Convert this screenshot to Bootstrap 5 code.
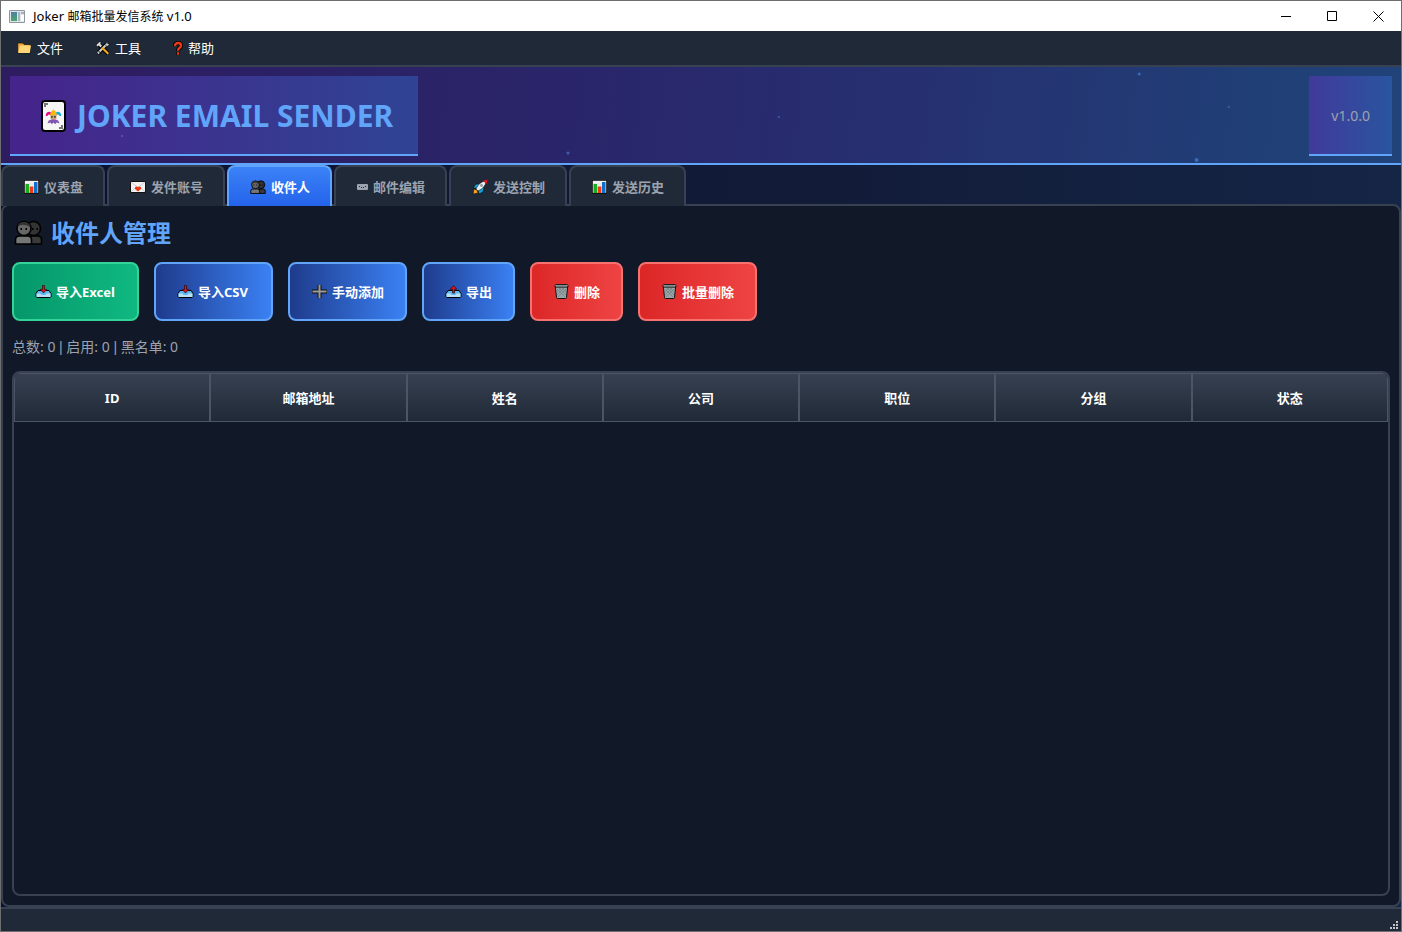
<!DOCTYPE html>
<html lang="zh-CN" data-bs-theme="dark">
<head>
<meta charset="utf-8">
<meta name="viewport" content="width=device-width, initial-scale=1">
<title>Joker 邮箱批量发信系统 v1.0</title>
<link href="https://cdn.jsdelivr.net/npm/bootstrap@5.3.0/dist/css/bootstrap.min.css" rel="stylesheet">
<style>
  :root {
    --line: #374151;
    --line-2: #4b5563;
    --panel: #1f2937;
    --page: #111827;
    --accent: #60a5fa;
    --dim: #9ca3af;
  }
  body {
    font-family: "Noto Sans", "Noto Sans CJK SC", sans-serif;
    font-size: 13px;
    line-height: 20px;
    color: #fff;
  }
  svg { display: block; flex: none; }
  .app-window {
    border: 1px solid #6e6e6e;
    background: linear-gradient(90deg, #0b1030 0%, #111a36 50%, #152546 100%);
  }
  .title-bar { height: 30px; background: #fff; color: #000; font-size: 12px; }
  .title-bar .latin { font-size: 13px; }
  .win-btn { width: 46px; height: 30px; border: 0; background: none; display: grid; place-items: center; padding: 0; }
  .menu-bar { height: 36px; background: var(--panel); border-bottom: 2px solid var(--line); }
  .menu-bar a { color: #fff; text-decoration: none; padding: 0 16px; gap: 4px; }
  .banner {
    height: 98px;
    padding: 9px 9px 7px;
    border-bottom: 2px solid var(--accent);
    background: linear-gradient(98deg, #2e1c60 0%, #2a256a 40%, #263070 65%, #203f77 90%, #20437a 100%);
  }
  .brand-box, .version-box { border-bottom: 2px solid var(--accent); height: 80px; }
  .brand-box { padding: 2px 25px 0 29px; gap: 9px; background: linear-gradient(90deg, #46248b, #2f4494); }
  .brand-box h1 { font-size: 30px; line-height: 40px; font-weight: 700; color: var(--accent); }
  .version-box { padding: 2px 22px 0; font-size: 14px; color: var(--dim); background: linear-gradient(90deg, #413a9b, #29559f); }
  .sparks { inset: 0; width: 100%; height: 100%; }
  .tab-strip { gap: 2px; margin-bottom: -2px; border: 0; z-index: 1; }
  .tab-strip .nav-link {
    height: 41px;
    margin: 0;
    padding: 0 20px;
    gap: 4px;
    border: 2px solid var(--line);
    border-bottom: 0;
    border-radius: 8px 8px 0 0;
    background: var(--panel);
    color: var(--dim);
    font-weight: 700;
  }
  .tab-strip .nav-link.active {
    border-color: var(--accent);
    color: #fff;
    background: linear-gradient(180deg, #3b82f6, #2563eb);
  }
  .pane { border: 2px solid var(--line); border-radius: 8px; background: var(--page); padding: 9px; gap: 10px; }
  .pane h2 { font-size: 24px; line-height: 35px; padding-bottom: 2px; font-weight: 700; color: var(--accent); gap: 6px; }
  .actions { gap: 15px; }
  .act {
    --bs-btn-color: #fff;
    --bs-btn-hover-color: #fff;
    --bs-btn-font-size: 13px;
    --bs-btn-font-weight: 700;
    --bs-btn-line-height: 20px;
    --bs-btn-border-width: 2px;
    --bs-btn-border-radius: 8px;
    height: 59px;
    padding: 0 21px 0 20px;
    gap: 3px;
    background-origin: border-box;
  }
  .act-green { min-width: 127px; border-color: #34d399; background-image: linear-gradient(90deg, #059669, #10b981); }
  .act-blue { border-color: #60a5fa; background-image: linear-gradient(90deg, #1e3a8a, #3b82f6); }
  .act-wide { min-width: 119px; }
  .act-red { border-color: #f87171; background-image: linear-gradient(90deg, #dc2626, #ef4444); }
  .totals { font-size: 14px; line-height: 28px; padding-top: 2px; color: var(--dim); }
  .totals .bar { font-family: "Liberation Sans", sans-serif; }
  .grid-box { border: 2px solid var(--line); border-radius: 8px; }
  .grid-table { table-layout: fixed; border-collapse: separate; border-spacing: 0; }
  .grid-table th {
    height: 49px;
    padding: 0;
    border: 1px solid var(--line-2);
    background: linear-gradient(180deg, #374151, #1f2937);
    text-align: center;
    vertical-align: middle;
    font-weight: 700;
    color: #fff;
  }
  .status-bar { height: 24px; background: var(--panel); border-top: 2px solid var(--line); padding: 0 2px 1px 0; }
</style>
</head>
<body>

<svg width="0" height="0" class="position-absolute" aria-hidden="true">
  <defs>
    <symbol id="i-chart" viewBox="0 0 15 14">
      <path fill="#111" d="M0 0h15v14H0z"/><path fill="#f1f1f1" d="M.8.800h13.400v12H.8z"/>
      <path stroke="#cfcfcf" stroke-width=".5" d="M1 4h13M1 7h13M1 10h13"/>
      <path fill="#16b01e" d="M1.500 4H5v9H1.500z"/><path fill="#f03a17" d="M5.700 6.500h3.600V13H5.700z"/><path fill="#0f6fce" d="M10 2h3.500v11H10z"/>
    </symbol>
    <symbol id="i-people" viewBox="0 0 28 25">
      <g stroke="#000" stroke-width="1.6" stroke-linejoin="round">
        <path fill="#3a3a3a" d="M14 24v-4q0-4 4-4h5q4 0 4 4v4z"/>
        <circle cx="19" cy="8.500" r="7" fill="#333"/>
        <path fill="#767676" d="M1 24v-4q0-4 4-4h8q4 0 4 4v4z"/>
        <circle cx="9.500" cy="8.500" r="7" fill="#666"/>
      </g>
      <path fill="#333" d="M3 8Q3 2 9 2q6 0 7 5-6-3-9-2-3 0-4 3z"/>
      <path d="M6 8h1.500v2H6zM11 8h1.500v2H11zM17.500 8H19v2h-1.500zM22 8h1.500v2H22z"/>
    </symbol>
    <symbol id="i-import" viewBox="0 0 16 13">
      <path fill="#5bb8f0" stroke="#000" d="M2.500 5.500h11l2 3v3.200l-.8.800H1.300l-.8-.8V8.500z"/>
      <path fill="#b9e0f6" d="M1 8.500h4l1 1.500h4l1-1.500h4v3l-.6.500H1.600L1 11.500z"/>
      <path fill="#e0121f" stroke="#35060a" stroke-width=".7" d="M7 .4h2v4h2.300L8 8 4.700 4.400H7z"/>
    </symbol>
    <symbol id="i-export" viewBox="0 0 16 13">
      <path fill="#5bb8f0" stroke="#000" d="M2.500 5.500h11l2 3v3.200l-.8.800H1.300l-.8-.8V8.500z"/>
      <path fill="#b9e0f6" d="M1 8.500h4l1 1.500h4l1-1.500h4v3l-.6.500H1.600L1 11.500z"/>
      <path fill="#e0121f" stroke="#35060a" stroke-width=".7" d="M7 8V4.300H4.700L8 .6l3.300 3.700H9V8z"/>
    </symbol>
    <symbol id="i-trash" viewBox="0 0 15 15">
      <path fill="#9aa5a8" stroke="#111" d="M1.300 2.500l1.200 11q.1 1 1 1h8q.9 0 1-1l1.200-11z"/>
      <path stroke="#69757a" stroke-width=".6" fill="none" d="M3 5l8 8M5 4l7 7M8 4l4 4M12 5l-8 8M10 4l-7 7M7 4L3 8"/>
      <path fill="#a9b3b5" stroke="#111" stroke-linejoin="round" d="M.8 1.500l1-.9h11.400l1 .9-.6 1.600H1.400z"/>
      <path fill="#6d787b" d="M3 1.500h9v.800H3z"/>
    </symbol>
  </defs>
</svg>

<div class="app-window vh-100 d-flex flex-column overflow-hidden">

  <header class="title-bar d-flex align-items-center">
    <svg class="ms-2 me-1" width="16" height="13" viewBox="0 0 16 13" aria-hidden="true">
      <defs><linearGradient id="scr" x2="0" y2="1"><stop stop-color="#4b7fa8"/><stop offset="1" stop-color="#4da76b"/></linearGradient></defs>
      <path fill="#dfe5ea" stroke="#8f979c" d="M.5.500h15v12H.5z"/><path fill="url(#scr)" d="M2 2h6v9H2z"/>
      <path fill="#a7b6bf" d="M9 2h2v9H9z"/><path fill="#fff" d="M12 5h3v6h-3z"/><path fill="#9fb3c4" d="M12 2h3v2h-3z"/>
    </svg>
    <span class="me-auto ps-1"><span class="latin">Joker </span>邮箱批量发信系统<span class="latin"> v1.0</span></span>
    <button class="win-btn" type="button" aria-label="最小化"><svg width="10" height="10"><path fill="#000" d="M0 5h10v1H0z"/></svg></button>
    <button class="win-btn" type="button" aria-label="最大化"><svg width="10" height="10"><path fill="none" stroke="#000" d="M.5.500h9v9h-9z"/></svg></button>
    <button class="win-btn" type="button" aria-label="关闭"><svg width="11" height="11"><path stroke="#000" d="M.5.500l10 10M10.500.500l-10 10"/></svg></button>
  </header>

  <nav class="menu-bar d-flex">
    <a href="#" class="d-flex align-items-center">
      <svg width="16" height="12" viewBox="0 0 16 12" aria-hidden="true"><path fill="#e8a33d" stroke="#111" stroke-width=".7" d="M.7 1h5l1.500 1.500h6V11H.7z"/><path fill="#ffd778" d="M2.700 3.500H14L12.700 11H1.300z"/></svg>
      文件</a>
    <a href="#" class="d-flex align-items-center">
      <svg width="16" height="14" viewBox="0 0 16 14" aria-hidden="true">
        <path stroke="#000" stroke-width="4" d="M3 12L12 3M4.500 4L13 12.500"/>
        <path stroke="#c9ced1" stroke-width="2.200" d="M3 12L12 3"/>
        <path fill="#c9ced1" stroke="#000" stroke-width=".6" d="M10 3.500L12.500.500l.3 2.200 2.200.5-3 2.500zM1.500 11l2.500-1 1 2.500L3.500 13.500z"/>
        <path stroke="#f7a71b" stroke-width="2.200" d="M7 6.500L13.200 12.700"/>
        <path fill="#dfe3e5" stroke="#000" stroke-width=".6" d="M1 4l3.500-3.200 2 .7-1 1.300 1.800 2-1.800 1.800-2-1.800L2.300 6z"/>
      </svg>
      工具</a>
    <a href="#" class="d-flex align-items-center">
      <svg width="11" height="15" viewBox="0 0 11 15" aria-hidden="true"><g fill="none"><path stroke="#000" stroke-width="4" d="M2 5Q2 2 5 2t3 2.500Q8 6 6.500 7T5 10M5 11v3"/><path stroke="#f03a17" stroke-width="2.300" d="M2 5Q2 2 5 2t3 2.500Q8 6 6.500 7T5 9.800M5 11.300v2.400"/></g></svg>
      帮助</a>
  </nav>

  <section class="banner position-relative d-flex justify-content-between">
    <div class="brand-box d-flex align-items-center">
      <svg width="29" height="34" viewBox="0 0 29 34" aria-hidden="true">
        <rect x="3" y="2" width="23" height="30" rx="3" fill="#f5f5f5" stroke="#000" stroke-width="2"/>
        <path fill="#777" d="M5 4h4v2H7v2H5zM24 30h-4v-2h2v-2h2z"/>
        <g transform="translate(2 2.500) scale(.86)">
          <path fill="#e5098a" d="M5.500 17q0-5 4.500-5l3.500 2-1 3-3-2q-2 0-2 2z"/>
          <path fill="#10aee0" d="M23.500 17q0-5-4.500-5l-3.500 2 1 3 3-2q2 0 2 2z"/>
          <path fill="#ffb900" d="M10.500 15q1-4 3.500-5l.5-2 .5 2q2.500 1 3.500 5l-1 2h-6z"/>
          <path fill="#d5a67b" d="M11 15.500h7v4q-1 2-3.500 2T11 19.500z"/><path fill="#222" d="M12 17h1.500v2H12zM15.500 17H17v2h-1.500z"/>
          <path fill="#8054b5" d="M9 22l3-1h5l3 1 1.500 3.500-3.500-1-1.500 2-2-2-2 2-1.500-2-3.500 1z"/>
        </g>
      </svg>
      <h1 class="m-0 text-nowrap">JOKER EMAIL SENDER</h1>
    </div>
    <div class="version-box d-flex align-items-center">v1.0.0</div>
    <svg class="sparks position-absolute pe-none" fill="#60a5fa" fill-opacity=".45" aria-hidden="true">
      <circle cx="8.650%" cy="69" r="1"/><circle cx="40.500%" cy="86" r="1.500"/><circle cx="55.560%" cy="50" r="1"/>
      <circle cx="81.300%" cy="7" r="1.500"/><circle cx="87.700%" cy="40" r="1"/><circle cx="85.400%" cy="93" r="2"/>
    </svg>
  </section>

  <div class="nav nav-tabs tab-strip position-relative flex-nowrap" role="tablist">
    <button class="nav-link d-flex align-items-center" type="button" role="tab"><svg width="17" height="14"><use href="#i-chart"/></svg>仪表盘</button>
    <button class="nav-link d-flex align-items-center" type="button" role="tab">
      <svg width="18" height="12" viewBox="0 0 18 12" aria-hidden="true"><path fill="#f2f2f2" stroke="#111" d="M1.500.500h15v11h-15z"/><path fill="none" stroke="#bbb" stroke-width=".7" d="M2 1l7 5.500L16 1M2 11l5-5M16 11l-5-5"/><path fill="#f03a17" d="M9 10.500L6 8Q5.500 5.500 7.500 5.500q1 0 1.500.5.500-.5 1.500-.5 2 0 1.500 2.500z"/></svg>发件账号</button>
    <button class="nav-link active d-flex align-items-center" type="button" role="tab" aria-selected="true"><svg width="18" height="14"><use href="#i-people"/></svg>收件人</button>
    <button class="nav-link d-flex align-items-center" type="button" role="tab">
      <svg width="13" height="6" viewBox="0 0 13 6" aria-hidden="true"><rect x="1" width="11" height="6" rx="1" fill="#9ca3af"/><path fill="#1f2937" d="M3 2h1v1H3zM5 3h1v1H5zM7 3h1v1H7zM9 2h1v1H9z"/></svg>邮件编辑</button>
    <button class="nav-link d-flex align-items-center" type="button" role="tab">
      <svg width="18" height="16" viewBox="0 0 18 16" aria-hidden="true"><path fill="#ffa21f" stroke="#111" stroke-width=".6" d="M2 15l1-5 3 1 1 3z"/><path fill="#12a4e0" stroke="#111" stroke-width=".7" d="M2 9l3-4h4l4 4-1 4-4 2-1-4-2-2z"/><path fill="#e9eef0" stroke="#111" stroke-width=".6" d="M5 10Q8 3 14 2l2-1-1 2q-1 6-8 9z"/><path fill="#e81224" d="M12 1.800L16.600.600 15.500 5.200z"/><circle cx="10.500" cy="6.500" r="1.400" fill="#8d999b"/></svg>发送控制</button>
    <button class="nav-link d-flex align-items-center" type="button" role="tab"><svg width="17" height="14"><use href="#i-chart"/></svg>发送历史</button>
  </div>

  <main class="pane flex-grow-1 d-flex flex-column">
    <h2 class="m-0 d-flex align-items-center"><svg width="33" height="25"><use href="#i-people"/></svg>收件人管理</h2>

    <div class="actions d-flex">
      <button type="button" class="btn act act-green d-flex align-items-center"><svg width="19" height="13"><use href="#i-import"/></svg>导入Excel</button>
      <button type="button" class="btn act act-blue act-wide d-flex align-items-center"><svg width="19" height="13"><use href="#i-import"/></svg>导入CSV</button>
      <button type="button" class="btn act act-blue act-wide d-flex align-items-center"><svg width="19" height="15" viewBox="0 0 19 15" aria-hidden="true"><path stroke="#111" stroke-width="4" d="M9.500 1v13M2 7.500h15"/><path stroke="#9b9b9b" stroke-width="2" d="M9.500 1v13M2.500 7.500h14"/></svg>手动添加</button>
      <button type="button" class="btn act act-blue d-flex align-items-center"><svg width="19" height="13"><use href="#i-export"/></svg>导出</button>
      <button type="button" class="btn act act-red d-flex align-items-center"><svg width="19" height="15"><use href="#i-trash"/></svg>删除</button>
      <button type="button" class="btn act act-red act-wide d-flex align-items-center"><svg width="19" height="15"><use href="#i-trash"/></svg>批量删除</button>
    </div>

    <div class="totals">总数: 0 <span class="bar">|</span> 启用: 0 <span class="bar">|</span> 黑名单: 0</div>

    <div class="grid-box flex-grow-1 overflow-hidden">
      <table class="grid-table w-100">
        <thead><tr><th scope="col">ID</th><th scope="col">邮箱地址</th><th scope="col">姓名</th><th scope="col">公司</th><th scope="col">职位</th><th scope="col">分组</th><th scope="col">状态</th></tr></thead>
        <tbody></tbody>
      </table>
    </div>
  </main>

  <footer class="status-bar d-flex justify-content-end align-items-end">
    <svg width="9" height="9" viewBox="0 0 9 9" fill="#c4c4c4" aria-hidden="true"><path d="M6 0h2v2H6zM6 3h2v2H6zM3 3h2v2H3zM6 6h2v2H6zM3 6h2v2H3zM0 6h2v2H0z"/></svg>
  </footer>
</div>

<script src="https://cdn.jsdelivr.net/npm/bootstrap@5.3.0/dist/js/bootstrap.bundle.min.js"></script>
</body>
</html>
